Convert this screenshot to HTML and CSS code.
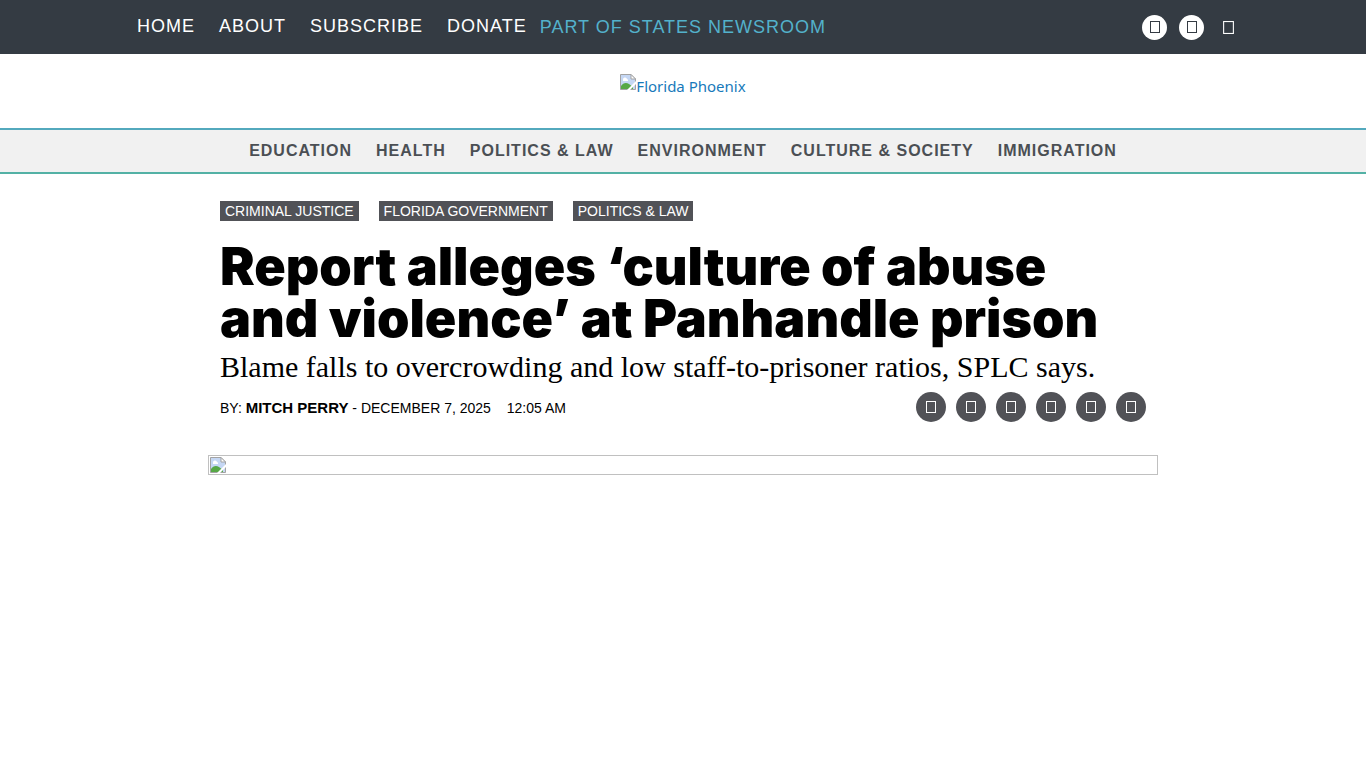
FILE: index.html
```html
<!DOCTYPE html>
<html lang="en">
<head>
    <meta charset="UTF-8">
    <meta name="viewport" content="width=device-width, initial-scale=1">
    <title>Report alleges ‘culture of abuse and violence’ at Panhandle prison</title>
    <link rel="stylesheet" href="styles.css">
</head>
<body>

<!-- shared icons -->
<svg class="sprite" aria-hidden="true">
    <symbol id="glyph" viewBox="0 0 10 12">
        <rect x="0.5" y="0.5" width="9" height="11" fill="none" stroke="currentColor"/>
    </symbol>
    <symbol id="picture" viewBox="0 0 16 16">
        <path d="M0.5 0.5H11L15.5 5V15.5H0.5Z" fill="#c5d7f4" stroke="#a3a3a3"/>
        <path d="M11 0.5V5H15.5Z" fill="#fff" stroke="#a3a3a3"/>
        <path d="M3 6a2 2 0 0 1 4-1a1.500 1.500 0 0 1 1 2H3Z" fill="#fff"/>
        <path d="M1 15V12C3 9 6 8 9 10L13 13V15Z" fill="#57a846"/>
        <path d="M7 16L16 7V10L10 16Z" fill="#fff"/>
    </symbol>
</svg>

<header>
    <div class="topbar">
        <div class="topbar-inner">
            <nav class="top-links">
                <a href="#">HOME</a>
                <a href="#">ABOUT</a>
                <a href="#">SUBSCRIBE</a>
                <a href="#">DONATE</a>
            </nav>
            <a class="network" href="#">PART OF STATES NEWSROOM</a>
            <div class="social">
                <a href="#" aria-label="Facebook"><svg class="glyph"><use href="#glyph"/></svg></a>
                <a href="#" aria-label="Twitter"><svg class="glyph"><use href="#glyph"/></svg></a>
                <button class="search" type="button" aria-label="Search"><svg class="glyph"><use href="#glyph"/></svg></button>
            </div>
        </div>
    </div>

    <div class="brand">
        <a href="#"><svg class="picture"><use href="#picture"/></svg>Florida Phoenix</a>
    </div>

    <nav class="sections">
        <a href="#">EDUCATION</a>
        <a href="#">HEALTH</a>
        <a href="#">POLITICS &amp; LAW</a>
        <a href="#">ENVIRONMENT</a>
        <a href="#">CULTURE &amp; SOCIETY</a>
        <a href="#">IMMIGRATION</a>
    </nav>
</header>

<main class="article">
    <div class="article-head">
        <div class="tags">
            <a href="#">CRIMINAL JUSTICE</a>
            <a href="#">FLORIDA GOVERNMENT</a>
            <a href="#">POLITICS &amp; LAW</a>
        </div>
        <h1>Report alleges ‘culture of abuse and violence’ at Panhandle prison</h1>
        <h2>Blame falls to overcrowding and low staff-to-prisoner ratios, SPLC says.</h2>
        <div class="meta">
            <p class="byline">BY: <a href="#">MITCH PERRY</a> - DECEMBER 7, 2025 <span class="time">12:05 AM</span></p>
            <div class="share">
                <a href="#" aria-label="Share on Facebook"><svg class="glyph"><use href="#glyph"/></svg></a>
                <a href="#" aria-label="Share on Twitter"><svg class="glyph"><use href="#glyph"/></svg></a>
                <a href="#" aria-label="Share on LinkedIn"><svg class="glyph"><use href="#glyph"/></svg></a>
                <a href="#" aria-label="Share by email"><svg class="glyph"><use href="#glyph"/></svg></a>
                <a href="#" aria-label="Print"><svg class="glyph"><use href="#glyph"/></svg></a>
                <a href="#" aria-label="Republish"><svg class="glyph"><use href="#glyph"/></svg></a>
            </div>
        </div>
    </div>
    <div class="featured"><svg class="picture"><use href="#picture"/></svg></div>
</main>

</body>
</html>
```
FILE: styles.css
```css
* {
    margin: 0;
    padding: 0;
    box-sizing: border-box;
}

body {
    font-family: "Liberation Sans", Arial, sans-serif;
    background-color: #fff;
    color: #000;
}

a {
    color: inherit;
    text-decoration: none;
}

.sprite {
    display: none;
}

.glyph {
    display: block;
    width: 10px;
    height: 12px;
}

.picture {
    width: 16px;
    height: 16px;
}

.topbar {
    background-color: #343b43;
    color: #fff;
}

.topbar-inner {
    display: flex;
    align-items: center;
    max-width: 1140px;
    min-height: 54px;
    margin: 0 auto;
    padding: 0 12px 0 24px;
    font-size: 18px;
    letter-spacing: 1px;
}

.top-links {
    display: flex;
    gap: 24px;
    padding-bottom: 2px;
}

.network {
    margin-left: 13px;
    color: #53b1cb;
}

.social {
    display: flex;
    gap: 12px;
    margin-left: auto;
}

.social a,
.search {
    display: flex;
    align-items: center;
    justify-content: center;
    width: 25px;
    height: 25px;
    border: none;
    border-radius: 50%;
    background-color: #fff;
    color: #343b43;
}

.search {
    background: none;
    color: #fff;
    cursor: pointer;
}

.search .glyph {
    width: 11px;
    height: 13px;
}

.brand {
    display: flex;
    justify-content: center;
    padding: 20px 0 30px;
    font-family: "Noto Sans", "Open Sans", sans-serif;
    font-size: 15px;
    line-height: 24px;
    color: #1779ba;
}

.brand a {
    display: flex;
}

.sections {
    display: flex;
    justify-content: center;
    gap: 24px;
    padding: 11px 0;
    border-top: 2px solid #53a9bd;
    border-bottom: 2px solid #53b1a5;
    background-color: #f1f1f1;
    color: #4b4f54;
    font-size: 16px;
    font-weight: bold;
    letter-spacing: 1px;
    line-height: 20px;
}

.article {
    max-width: 950px;
    margin: 0 auto;
    padding-top: 27px;
}

.article-head {
    padding: 0 12px;
}

.tags {
    display: flex;
    gap: 20px;
    margin-bottom: 20px;
}

.tags a {
    padding: 0 5px;
    background-color: #515257;
    color: #fff;
    font-size: 14px;
    line-height: 20px;
}

h1 {
    font-family: Inter, "Arial Black", sans-serif;
    font-size: 52px;
    font-weight: 900;
    line-height: 52px;
}

h2 {
    margin-top: 4px;
    font-family: "Liberation Serif", "Times New Roman", serif;
    font-size: 30px;
    font-weight: normal;
    line-height: 36px;
}

.meta {
    display: flex;
    align-items: center;
    justify-content: space-between;
    margin-top: 7px;
}

.byline {
    font-size: 14px;
}

.byline a {
    font-size: 15px;
    font-weight: bold;
}

.time {
    margin-left: 12px;
}

.share {
    display: flex;
    gap: 10px;
}

.share a {
    display: flex;
    align-items: center;
    justify-content: center;
    width: 30px;
    height: 30px;
    border-radius: 50%;
    background-color: #515257;
    color: #fff;
}

.featured {
    height: 20px;
    margin-top: 33px;
    padding: 1px;
    border: 1px solid #c0c0c0;
}

.featured .picture {
    display: block;
}
```
